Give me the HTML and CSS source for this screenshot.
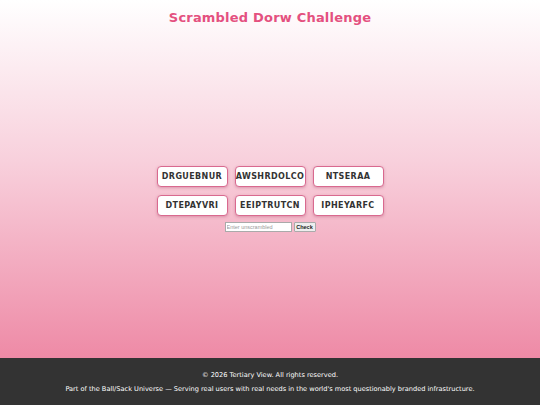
FILE: index.html
```html
<!DOCTYPE html>
<html>
<head>
<meta charset="utf-8">
<link rel="stylesheet" href="styles.css">
</head>
<body>
<div class="page">
  <main class="main">
    <h1 class="title">Scrambled Dorw Challenge</h1>
    <div class="game">
      <div class="grid">
        <div class="tile">DRGUEBNUR</div>
        <div class="tile">AWSHRDOLCO</div>
        <div class="tile">NTSERAA</div>
        <div class="tile">DTEPAYVRI</div>
        <div class="tile">EEIPTRUTCN</div>
        <div class="tile">IPHEYARFC</div>
      </div>
      <form class="guess">
        <input class="guess-input" type="text" placeholder="Enter unscrambled">
        <button class="guess-btn" type="button">Check</button>
      </form>
    </div>
  </main>
  <footer class="footer">
    <p class="footer-line">© 2026 Tertiary View. All rights reserved.</p>
    <p class="footer-line">Part of the Ball/Sack Universe — Serving real users with real needs in the world's most questionably branded infrastructure.</p>
  </footer>
</div>
</body>
</html>
```
FILE: styles.css
```css
html, body {
  margin: 0;
  padding: 0;
}
body {
  font-family: "DejaVu Sans", Verdana, sans-serif;
}
.page {
  display: flex;
  flex-direction: column;
  height: 405px;
}
.main {
  flex: 1;
  display: flex;
  flex-direction: column;
  align-items: center;
  background: linear-gradient(to bottom, #ffffff 0%, #f8d0dc 45%, #ee8aa6 100%);
}
.title {
  margin: 9px 0 0;
  font-size: 13px;
  font-weight: bold;
  color: #e4507f;
  letter-spacing: 0.2px;
  line-height: 17px;
}
.game {
  margin-top: 140px;
  display: flex;
  flex-direction: column;
  align-items: center;
  gap: 6px;
}
.grid {
  display: grid;
  grid-template-columns: repeat(3, 71px);
  gap: 8px 7px;
}
.tile {
  box-sizing: border-box;
  height: 21px;
  border: 1.5px solid #d9698f;
  border-radius: 4px;
  background: #fff;
  box-shadow: 0 1px 3px rgba(150, 40, 80, 0.3);
  display: flex;
  align-items: center;
  justify-content: center;
  font-size: 8px;
  font-weight: bold;
  color: #333;
  letter-spacing: 0.4px;
  white-space: nowrap;
}
.guess {
  display: flex;
  align-items: center;
  gap: 2px;
  margin: 0;
}
.guess-input {
  box-sizing: border-box;
  width: 67px;
  height: 10px;
  padding: 0 1px;
  border: 1px solid #aaa;
  font-family: "Liberation Sans", Arial, sans-serif;
  font-size: 5.5px;
  background: #fff;
}
.guess-input::placeholder {
  color: #999;
}
.guess-btn {
  box-sizing: border-box;
  height: 10px;
  width: 22px;
  padding: 0;
  border: 1px solid #aaa;
  border-radius: 1px;
  background: #eee;
  font-family: "Liberation Sans", Arial, sans-serif;
  font-size: 5.5px;
  font-weight: bold;
  color: #222;
}
.footer {
  height: 47px;
  background: #333333;
  color: #fff;
  display: flex;
  flex-direction: column;
  align-items: center;
  justify-content: center;
  gap: 6px;
}
.footer-line {
  margin: 0;
  font-size: 6.6px;
  line-height: 8px;
}
```
